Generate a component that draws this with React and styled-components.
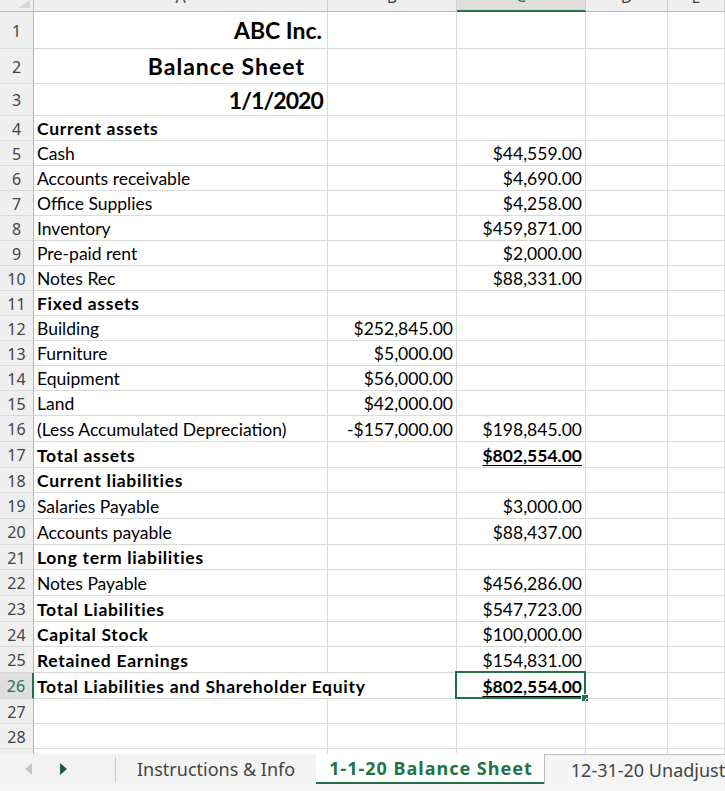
import React from 'react'
import styled, { createGlobalStyle, css } from 'styled-components'

const GREEN = '#217346'
const GRID = '#dadada'

const GlobalStyle = createGlobalStyle`
  html, body {
    margin: 0;
    padding: 0;
    background: #ffffff;
    overflow: hidden;
  }
  * {
    box-sizing: border-box;
  }
`

const cols = ['A', 'B', 'C', 'D', 'E']

const rows = [
  { n: 1, h: 37, a: 'ABC Inc.', title: true, pad: 5, ls: 0 },
  { n: 2, h: 35, a: 'Balance Sheet', title: true, pad: 22, ls: 1 },
  { n: 3, h: 32, a: '1/1/2020', title: true, pad: 4, ls: -0.9 },
  { n: 4, h: 25, a: 'Current assets', bold: true },
  { n: 5, h: 25, a: 'Cash', c: '$44,559.00' },
  { n: 6, h: 25, a: 'Accounts receivable', c: '$4,690.00' },
  { n: 7, h: 25, a: 'Office Supplies', c: '$4,258.00' },
  { n: 8, h: 25, a: 'Inventory', c: '$459,871.00' },
  { n: 9, h: 25, a: 'Pre-paid rent', c: '$2,000.00' },
  { n: 10, h: 25, a: 'Notes Rec', c: '$88,331.00' },
  { n: 11, h: 25, a: 'Fixed assets', bold: true },
  { n: 12, h: 25, a: 'Building', b: '$252,845.00' },
  { n: 13, h: 25, a: 'Furniture', b: '$5,000.00' },
  { n: 14, h: 25, a: 'Equipment', b: '$56,000.00' },
  { n: 15, h: 25, a: 'Land', b: '$42,000.00' },
  { n: 16, h: 26, a: '(Less Accumulated Depreciation)', b: '-$157,000.00', c: '$198,845.00' },
  { n: 17, h: 26, a: 'Total assets', bold: true, c: '$802,554.00', total: true },
  { n: 18, h: 25, a: 'Current liabilities', bold: true },
  { n: 19, h: 26, a: 'Salaries Payable', c: '$3,000.00' },
  { n: 20, h: 26, a: 'Accounts payable', c: '$88,437.00' },
  { n: 21, h: 25, a: 'Long term liabilities', bold: true },
  { n: 22, h: 26, a: 'Notes Payable', c: '$456,286.00' },
  { n: 23, h: 26, a: 'Total Liabilities', bold: true, c: '$547,723.00' },
  { n: 24, h: 25, a: 'Capital Stock', bold: true, c: '$100,000.00' },
  { n: 25, h: 26, a: 'Retained Earnings', bold: true, c: '$154,831.00' },
  { n: 26, h: 26, a: 'Total Liabilities and Shareholder Equity', bold: true, c: '$802,554.00', total: true, wide: true, active: true },
  { n: 27, h: 25 },
  { n: 28, h: 25 },
  { n: 29, h: 25 },
]

export default function App() {
  return (
    <Page>
      <GlobalStyle />
      <Sheet $rows={rows.map((r) => r.h)}>
        <Corner>
          <svg width="33" height="11" viewBox="0 0 33 11">
            <polygon points="30,0 30,8 18,8" fill="#d6d6d6" />
          </svg>
        </Corner>
        {cols.map((c) => (
          <ColHead key={c} $active={c === 'C'}>
            <span>{c}</span>
          </ColHead>
        ))}

        {rows.map((r) => (
          <React.Fragment key={r.n}>
            <RowHead $active={r.active}>{r.n}</RowHead>
            <Cell
              $span={r.wide ? 2 : 1}
              $bold={r.bold || r.title}
              $label={r.bold}
              $title={r.title}
              $right={r.title}
              $pad={r.pad}
              $ls={r.ls}
            >
              {r.a}
            </Cell>
            {!r.wide && <Cell $right>{r.b}</Cell>}
            <Cell $right $bold={r.total}>
              {r.total ? <Underlined>{r.c}</Underlined> : r.c}
              {r.active && (
                <Selection>
                  <Handle />
                </Selection>
              )}
            </Cell>
            <Cell />
            <Cell />
          </React.Fragment>
        ))}
      </Sheet>

      <TabBar>
        <Arrows>
          <svg width="10" height="12" viewBox="0 0 10 12">
            <polygon points="8,0 8,12 1,6" fill="#c6c6c6" />
          </svg>
          <svg width="10" height="12" viewBox="0 0 10 12">
            <polygon points="2,0 2,12 9,6" fill="#1d5a38" />
          </svg>
        </Arrows>
        <Divider />
        <Tab>Instructions &amp; Info</Tab>
        <Tab $active>1-1-20 Balance Sheet</Tab>
        <Tab $boxed>12-31-20 Unadjusted Trial Balance</Tab>
      </TabBar>
    </Page>
  )
}

const Page = styled.div`
  width: 725px;
  height: 791px;
  overflow: hidden;
  display: flex;
  flex-direction: column;
  background: #ffffff;
`

const Sheet = styled.div`
  height: 754px;
  flex: none;
  overflow: hidden;
  display: grid;
  grid-template-columns: 34px 294px 129px 129px 82px 1fr;
  grid-template-rows: 12px ${(p) => p.$rows.map((h) => `${h}px`).join(' ')};
  font-family: Lato, 'Liberation Sans', sans-serif;
  font-size: 17.5px;
  color: #000000;
`

const headBase = css`
  background: #efefef;
  color: #444444;
  font-family: 'Noto Sans', 'Open Sans', sans-serif;
  font-size: 16px;
`

const Corner = styled.div`
  ${headBase};
  border-right: 1px solid #b8b8b8;
  border-bottom: 1px solid #b8b8b8;
  overflow: hidden;
  svg {
    display: block;
  }
`

const ColHead = styled.div`
  ${headBase};
  display: flex;
  justify-content: center;
  align-items: flex-end;
  overflow: hidden;
  border-right: 1px solid #d0d0d0;
  border-bottom: 1px solid #b8b8b8;
  span {
    line-height: 15px;
    margin-bottom: 6px;
  }
  ${(p) =>
    p.$active &&
    css`
      background: #dedede;
      color: ${GREEN};
      border-bottom: 2px solid ${GREEN};
    `}
`

const RowHead = styled.div`
  ${headBase};
  display: flex;
  justify-content: center;
  align-items: center;
  padding-top: 1px;
  border-right: 1px solid #b8b8b8;
  border-bottom: 1px solid #d8d8d8;
  ${(p) =>
    p.$active &&
    css`
      background: #dedede;
      color: ${GREEN};
      border-right: 2px solid ${GREEN};
    `}
`

const Cell = styled.div`
  position: relative;
  grid-column: span ${(p) => p.$span || 1};
  display: flex;
  align-items: center;
  justify-content: ${(p) => (p.$right ? 'flex-end' : 'flex-start')};
  padding: 1px ${(p) => (p.$pad != null ? p.$pad : 3)}px 0 3px;
  white-space: nowrap;
  border-right: 1px solid ${GRID};
  border-bottom: 1px solid ${GRID};
  font-weight: ${(p) => (p.$bold ? 700 : 400)};
  letter-spacing: ${(p) => (p.$label ? '0.7px' : 'normal')};
  ${(p) =>
    p.$title &&
    css`
      font-size: 23px;
      padding-top: 0;
      letter-spacing: ${p.$ls || 0}px;
    `}
`

const Underlined = styled.span`
  text-decoration: underline;
  text-decoration-thickness: 1px;
  text-underline-offset: 3px;
`

const Selection = styled.div`
  position: absolute;
  top: -2px;
  left: -2px;
  right: -1px;
  bottom: -1px;
  border: 2px solid ${GREEN};
  pointer-events: none;
`

const Handle = styled.div`
  position: absolute;
  right: -4px;
  bottom: -4px;
  width: 7px;
  height: 7px;
  background: ${GREEN};
  border-top: 1px solid #ffffff;
  border-left: 1px solid #ffffff;
`

const TabBar = styled.div`
  flex: 1;
  display: flex;
  align-items: stretch;
  overflow: hidden;
  background: #f3f3f3;
  border-bottom: 7px solid #f7f7f7;
  font-family: 'Noto Sans', 'Open Sans', sans-serif;
  font-size: 18px;
  white-space: nowrap;
`

const Arrows = styled.div`
  flex: none;
  width: 115px;
  display: flex;
  align-items: center;
  gap: 24px;
  padding-left: 24px;
  svg {
    display: block;
  }
`

const Divider = styled.div`
  flex: none;
  width: 1px;
  margin: 3px 0 1px;
  background: #c8c8c8;
`

const Tab = styled.div`
  flex: none;
  display: flex;
  align-items: center;
  padding: 0 21px 0 21px;
  color: #444444;
  ${(p) =>
    p.$active &&
    css`
      padding: 0 11px 0 13px;
      background: #ffffff;
      color: ${GREEN};
      font-weight: 700;
      letter-spacing: 1px;
      border-bottom: 2px solid ${GREEN};
    `}
  ${(p) =>
    p.$boxed &&
    css`
      padding-left: 26px;
      border-left: 1px solid #bdbdbd;
      border-top: 1px solid #bdbdbd;
      background: #f5f5f5;
    `}
`
